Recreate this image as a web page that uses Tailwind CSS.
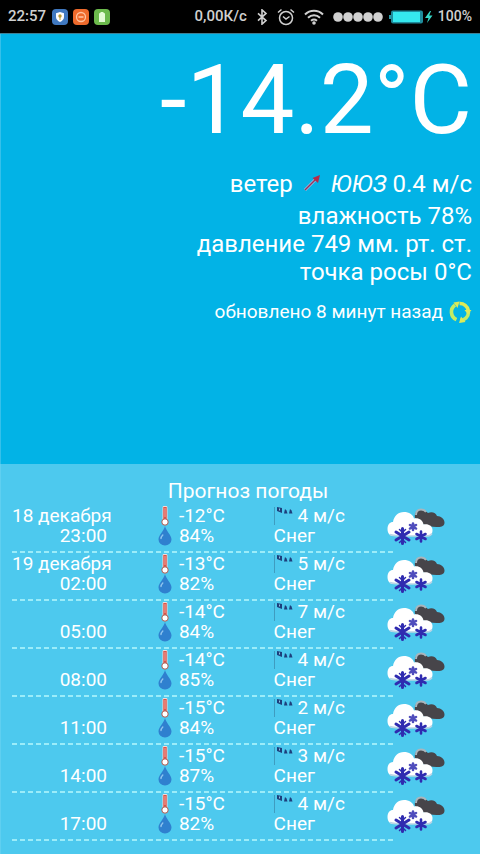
<!DOCTYPE html>
<html lang="ru">

<head>
    <meta charset="UTF-8">
    <meta name="viewport" content="width=device-width, initial-scale=1.0">
    <title>Погода</title>
    <script src="https://cdn.jsdelivr.net/npm/@tailwindcss/browser@4"></script>
</head>

<body class="min-h-screen flex flex-col bg-[#4dc9ee] font-[Roboto,sans-serif] text-white overflow-x-hidden">

    <!-- icons -->
    <svg class="hidden">
        <symbol id="termometr" viewBox="0 0 14 20">
            <path d="M7 2v12" stroke="#f3d9d6" stroke-width="5" stroke-linecap="round" />
            <path d="M7 1v13" stroke="#d9544a" stroke-width="3.4" />
            <path d="M7 2v9" stroke="#f0a59c" stroke-width="1" />
            <circle cx="7" cy="16" r="3.2" fill="#fff" stroke="#a8584e" stroke-width="1" />
        </symbol>
        <symbol id="kaplya" viewBox="0 0 14 20">
            <path d="M7 0C8 5 13.500 9 13.500 13.500A6.500 6 0 0 1 .5 13.500C.5 9 6 5 7 0z" fill="#2f80cf" />
            <path d="M3 12.500c0-1.500.8-2.500 1.800-3.500" stroke="#8fc4ee" stroke-width="1.400" fill="none" stroke-linecap="round" />
        </symbol>
        <symbol id="flyuger" viewBox="0 0 20 20">
            <path d="M.5 1v18" stroke="#3f9cc0" stroke-width="1" />
            <path d="M3 1l5 1v5l-5-2z" fill="#1d3f7c" />
            <path d="M5.500 2.500v2" stroke="#8fc0e0" stroke-width="1" />
            <path d="M11 3l1.500 1.500L13.500 7.500H10z" fill="#1d3f7c" />
            <path d="M16 3l1.500 1.500L18.500 7.500H15z" fill="#1d3f7c" />
        </symbol>
        <symbol id="sneg" viewBox="0 0 58 38">
            <path d="M28 10c-1-5 2-8 6-8 3 0 5 1 7 3 4-2 8 0 9 3 4 0 7.500 3 7.500 6.500 0 4-4 5-8 4.500-5 0-10-1-14-3z" fill="#47454a" />
            <path d="M29 7c0-3.500 2-5.500 5-5.500 2.500 0 4 1 5 2.500" stroke="#a9b5bc" stroke-width="2" fill="none" />
            <path d="M7 28c-4 0-6.500-2.500-6.500-7S3 14 6 14C7 8 11 4 17 4c5 0 9 2.500 10 6.500 5-1 9 2 9.500 6 5-1 9 1.500 9 5.500 0 4-2 6-5 6z" fill="#fff" />
            <path d="M3 26.500c3 1.500 10 1.500 16 1.500h20c3 0 5-1 6-2.500" stroke="#b9d4e6" stroke-width="1.500" fill="none" />
            <g stroke="#2f2bb0" stroke-linecap="round">
                <path d="M15.500 20.500v15M9 24l13 8M9 32l13-8" stroke-width="3" />
                <path d="M12.500 21.500l3 3 3-3M12.500 34.500l3-3 3 3" stroke-width="1.500" fill="none" />
                <path d="M34 23.500v10M29.500 26l9 5M29.500 31l9-5" stroke-width="2.600" />
                <path d="M26 15.500v6.500M23 17l6 3.500M23 20.500l6-3.500" stroke-width="2.600" stroke="#4f4dbc" />
            </g>
        </symbol>
    </svg>

    <header class="h-[34px] shrink-0 bg-black text-[#d0d0d0] flex items-center justify-between px-2 border-b border-[#3d8096] whitespace-nowrap">
        <div class="flex items-center gap-[5px]">
            <span class="text-[15px] font-medium mr-px">22:57</span>
            <svg class="size-4" viewBox="0 0 16 16">
                <rect width="16" height="16" rx="4" fill="#3f78c0" />
                <path d="M8 3l4 1.300V8c0 2.500-2 4-4 5-2-1-4-2.500-4-5V4.300z" fill="#fff" />
                <circle cx="8" cy="7" r="1.700" fill="#b89b35" />
                <path d="M8 8v3" stroke="#b89b35" />
            </svg>
            <svg class="size-4" viewBox="0 0 16 16">
                <rect width="16" height="16" rx="4" fill="#ee6a2c" />
                <circle cx="8" cy="8" r="4.500" fill="none" stroke="#ffc3a0" stroke-width="1.300" />
                <path d="M5.500 8h5" stroke="#ffc3a0" stroke-width="1.600" />
            </svg>
            <svg class="size-4" viewBox="0 0 16 16">
                <rect width="16" height="16" rx="4" fill="#6cba4c" />
                <path d="M5 5a1 1 0 0 1 1-1h.5V3h3v1h.5a1 1 0 0 1 1 1v8H5z" fill="#e3fbd5" />
            </svg>
        </div>
        <div class="flex items-center">
            <span class="text-[15px] font-medium">0,00К/с</span>
            <svg class="w-3 h-4 ml-[9px]" viewBox="0 0 12 18" fill="none" stroke="#d0d0d0" stroke-width="1.800">
                <path d="M1.500 5l9 8-4.500 4V1l4.500 4-9 8" />
            </svg>
            <svg class="w-[18px] h-[18px] ml-[9px]" viewBox="0 0 18 18" fill="none" stroke="#d0d0d0" stroke-width="1.500">
                <circle cx="9" cy="10" r="6.500" />
                <path d="M6 8.500l3 2.500 3.500-2.500M1 4.500L4.500 1.500M17 4.500l-3.500-3" />
            </svg>
            <svg class="w-5 h-4 ml-[9px]" viewBox="0 0 20 16" fill="none" stroke="#d0d0d0" stroke-width="2">
                <path d="M1 5.500c5-5 13-5 18 0M4 8.700c3.500-3.200 8.500-3.200 12 0M7 11.700c2-1.600 4-1.600 6 0" />
                <circle cx="10" cy="14" r="1.800" fill="#d0d0d0" stroke="none" />
            </svg>
            <svg class="w-[50px] h-[10px] ml-[9px]" viewBox="0 0 50 10" fill="#d0d0d0">
                <circle cx="5" cy="5" r="4.800" />
                <circle cx="15" cy="5" r="4.800" />
                <circle cx="25" cy="5" r="4.800" />
                <circle cx="35" cy="5" r="4.800" />
                <circle cx="45" cy="5" r="4.800" />
            </svg>
            <svg class="w-9 h-[14px] ml-[6px]" viewBox="0 0 36 14">
                <rect x="0" y="5" width="2" height="4" fill="#2a9aa8" />
                <rect x="2" y=".5" width="32" height="13" rx="2" fill="#1e8c9c" />
                <rect x="4" y="2" width="27" height="10" fill="#35e8ee" />
            </svg>
            <svg class="w-2 h-3" viewBox="0 0 8 12">
                <path d="M5 0L0 7h3.500L2 12l5.500-7.500H4.200L6 0z" fill="#35d8c8" />
            </svg>
            <span class="text-[14px] font-medium ml-[5px]">100%</span>
        </div>
    </header>

    <main class="flex-1 flex flex-col">
        <section class="min-h-[430px] bg-[#02b3e6] border-l border-[#35c0ea] px-2 text-right text-[24px] leading-7">
            <h1 class="text-[96px] leading-[132px]">-14.2°C</h1>
            <p class="mt-[2px] mb-[2px] flex justify-end items-center h-8">
                <span>ветер</span>
                <svg class="w-[18px] h-5 mx-[10px]" viewBox="0 0 18 20">
                    <path d="M2 16L13 5" stroke="#a9b4d8" stroke-width="3" />
                    <path d="M2 16L14 4" stroke="#8e3560" stroke-width="1.500" />
                    <path d="M17 1l-2 8-5.500-5z" fill="#b52a4a" />
                </svg>
                <span><i>ЮЮЗ</i> 0.4 м/с</span>
            </p>
            <p>влажность 78%</p>
            <p>давление 749 мм. рт. ст.</p>
            <p>точка росы 0°C</p>
            <p class="mt-3 flex justify-end items-center text-[19px]">
                <span>обновлено 8 минут назад</span>
                <button class="ml-[5px]" aria-label="Обновить">
                    <svg class="size-6" viewBox="0 0 24 24" fill="none" stroke="#c5ec62" stroke-width="3.600">
                        <path d="M8.500 19.700A8.500 8.500 0 0 1 7 5" />
                        <path d="M11.500 3.500A8.500 8.500 0 0 1 20.300 10.500" stroke="#dcea58" />
                        <path d="M20.500 12A8.500 8.500 0 0 1 12 20.500" />
                        <path d="M5.500 2.500l6-1L9.500 8zM17.500 22l-6.500 1 2-6.500z" fill="#dcea58" stroke="none" />
                        <path d="M16.500 10h7l-3.500 4.500z" fill="#dcea58" stroke="none" />
                    </svg>
                </button>
            </p>
        </section>

        <section class="flex-1 border-l border-[#5fcff0] pl-[11px] pr-8 pt-[14px] pb-3">
            <table class="w-full table-fixed text-[19px] leading-[20px]">
                <caption class="text-[21px] leading-[27px] pl-9">Прогноз погоды</caption>
                <colgroup>
                    <col class="w-[33%]">
                    <col class="w-[27%]">
                    <col class="w-[26%]">
                    <col class="w-[14%]">
                </colgroup>
                <tbody id="prognoz"></tbody>
            </table>
        </section>
    </main>
</body>

</html>

<script>
    const prognoz = [
        ["18 декабря", "23:00", -12, 84, 4],
        ["19 декабря", "02:00", -13, 82, 5],
        ["", "05:00", -14, 84, 7],
        ["", "08:00", -14, 85, 4],
        ["", "11:00", -15, 84, 2],
        ["", "14:00", -15, 87, 3],
        ["", "17:00", -15, 82, 4]
    ];

    const tbody = document.getElementById("prognoz");

    for (const [data, vremya, temp, vlazhnost, veter] of prognoz) {
        tbody.innerHTML += `
            <tr class="h-12 bg-[repeating-linear-gradient(90deg,#9becf9_0px,#9becf9_5px,transparent_5px,transparent_8px)] bg-no-repeat bg-[length:88%_2px] bg-bottom-left">
                <th scope="row" class="font-normal text-left align-bottom pb-[7px]">
                    <div class="w-[98px] whitespace-nowrap">
                        <div>${data}</div>
                        <div class="text-right pr-[3px]">${vremya}</div>
                    </div>
                </th>
                <td class="align-bottom pb-[7px]">
                    <div class="flex items-center">
                        <div class="flex flex-col w-[14px] mr-[7px] ml-[2px]">
                            <svg class="w-[14px] h-5"><use href="#termometr" /></svg>
                            <svg class="w-[14px] h-5"><use href="#kaplya" /></svg>
                        </div>
                        <div>
                            <div>${temp}°C</div>
                            <div>${vlazhnost}%</div>
                        </div>
                    </div>
                </td>
                <td class="align-bottom pb-[7px]">
                    <div class="flex">
                        <svg class="size-5 mr-1"><use href="#flyuger" /></svg>${veter} м/с
                    </div>
                    <div>Снег</div>
                </td>
                <td class="align-bottom pb-[7px]">
                    <svg class="w-[58px] h-[38px]"><use href="#sneg" /></svg>
                </td>
            </tr>`;
    }
</script>
